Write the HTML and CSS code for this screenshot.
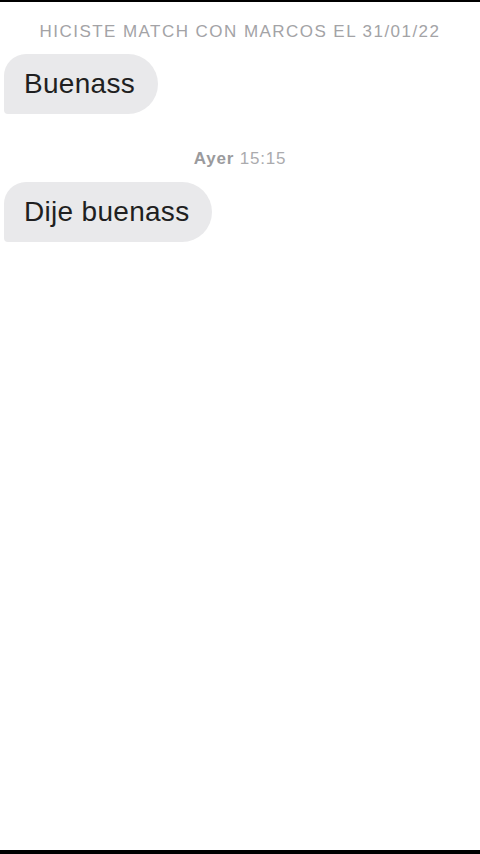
FILE: index.html
```html
<!DOCTYPE html>
<html lang="es">
<head>
<meta charset="utf-8">
<title>Chat</title>
<link rel="stylesheet" href="styles.css">
</head>
<body>
<div class="screen">
  <main class="chat">
    <p class="match-note">HICISTE MATCH CON MARCOS EL 31/01/22</p>
    <div class="bubble bubble-first">Buenass</div>
    <p class="timestamp"><b>Ayer</b> 15:15</p>
    <div class="bubble">Dije buenass</div>
  </main>
  <div class="bottom-bar"></div>
</div>
</body>
</html>
```
FILE: styles.css
```css
* { box-sizing: border-box; }
html, body { margin: 0; padding: 0; background: #fff; }
body { font-family: "Liberation Sans", Arial, sans-serif; }
.screen {
  width: 480px;
  height: 854px;
  display: flex;
  flex-direction: column;
  border-top: 2px solid #000;
  background: #fff;
}
.chat {
  flex: 1;
  display: flex;
  flex-direction: column;
  align-items: flex-start;
  padding: 20px 0 0 4px;
}
.match-note {
  align-self: stretch;
  margin: 0 4px 0 0;
  text-align: center;
  font-size: 17px;
  line-height: 20px;
  letter-spacing: 1.45px;
  color: #a3a3a6;
}
.bubble {
  background: #e9e9eb;
  color: #1f1f21;
  font-size: 28px;
  line-height: 34px;
  letter-spacing: 0.3px;
  padding: 13px 23px 13px 20px;
  border-radius: 22px 30px 30px 4px;
}
.bubble-first { margin-top: 12px; }
.timestamp {
  align-self: stretch;
  margin: 35px 4px 13px 0;
  text-align: center;
  font-size: 17px;
  line-height: 20px;
  letter-spacing: 0.8px;
  color: #ababae;
}
.timestamp b { color: #9a9a9d; font-weight: bold; }
.bottom-bar { height: 4px; background: #000; }
```
